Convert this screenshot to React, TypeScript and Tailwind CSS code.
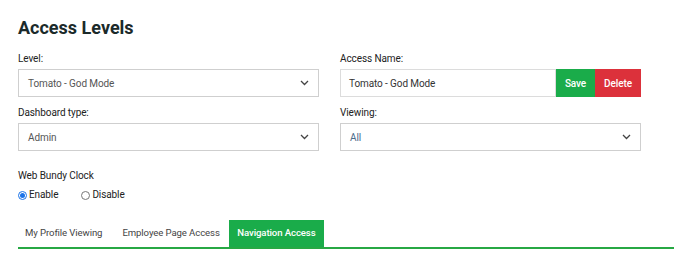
import React from "react";

const Chevron = () => (
  <svg width="9" height="6" viewBox="0 0 9 6" className="shrink-0">
    <path d="M1 1l3.5 3.5L8 1" fill="none" stroke="#444" strokeWidth="1.3" />
  </svg>
);

const Select = ({ value, valueClass = "text-[#555]" }: { value: string; valueClass?: string }) => (
  <div className="h-[28px] border border-[#cfcfcf] flex items-center justify-between pl-[9px] pr-[9px] bg-white">
    <span className={`text-[10px] ${valueClass}`}>{value}</span>
    <Chevron />
  </div>
);

export default function App() {
  return (
    <div className="w-[674px] h-[258px] bg-white pl-[18px] pt-[17px] text-[#222] tracking-[-0.1px]" style={{ fontFamily: "Roboto, 'Open Sans', sans-serif" }}>
      <h1 className="text-[18px] font-bold leading-[22px] text-[#1b2a2a] tracking-normal">Access Levels</h1>
      <div className="grid grid-cols-[301px_301px] gap-x-[21px] mt-[14px]">
        <div>
          <div className="text-[10px] leading-[12px] mb-[4px]">Level:</div>
          <Select value="Tomato - God Mode" />
        </div>
        <div>
          <div className="text-[10px] leading-[12px] mb-[4px]">Access Name:</div>
          <div className="flex h-[28px]">
            <div className="flex-1 border border-[#dcdcdc] flex items-center pl-[8px] text-[10px] text-[#333]">Tomato - God Mode</div>
            <div className="w-[39px] bg-[#1aac4a] text-white text-[10px] font-medium flex items-center justify-center">Save</div>
            <div className="w-[46px] bg-[#dc313b] text-white text-[10px] font-medium flex items-center justify-center">Delete</div>
          </div>
        </div>
        <div className="mt-[10px]">
          <div className="text-[10px] leading-[12px] mb-[4px]">Dashboard type:</div>
          <Select value="Admin" />
        </div>
        <div className="mt-[10px]">
          <div className="text-[10px] leading-[12px] mb-[4px]">Viewing:</div>
          <Select value="All" valueClass="text-[#4a6a8a]" />
        </div>
      </div>
      <div className="mt-[19px] text-[10px] leading-[12px]">Web Bundy Clock</div>
      <div className="flex items-center mt-[7px] text-[10px] leading-[12px]">
        <span className="w-[9px] h-[9px] rounded-full border border-[#1a73e8] flex items-center justify-center">
          <span className="w-[5px] h-[5px] rounded-full bg-[#1a73e8]" />
        </span>
        <span className="ml-[2px]">Enable</span>
        <span className="ml-[23px] w-[9px] h-[9px] rounded-full border border-[#777]" />
        <span className="ml-[2px]">Disable</span>
      </div>
      <div className="mt-[19px] flex border-b-2 border-[#27a844] h-[29px]">
        <div className="pl-[7px] pr-[11px] flex items-center text-[9.6px] text-[#444]">My Profile Viewing</div>
        <div className="px-[9px] flex items-center text-[9.6px] text-[#444]">Employee Page Access</div>
        <div className="px-[8.5px] flex items-center text-[9.6px] text-white bg-[#1aac4a] font-medium">Navigation Access</div>
      </div>
    </div>
  );
}
